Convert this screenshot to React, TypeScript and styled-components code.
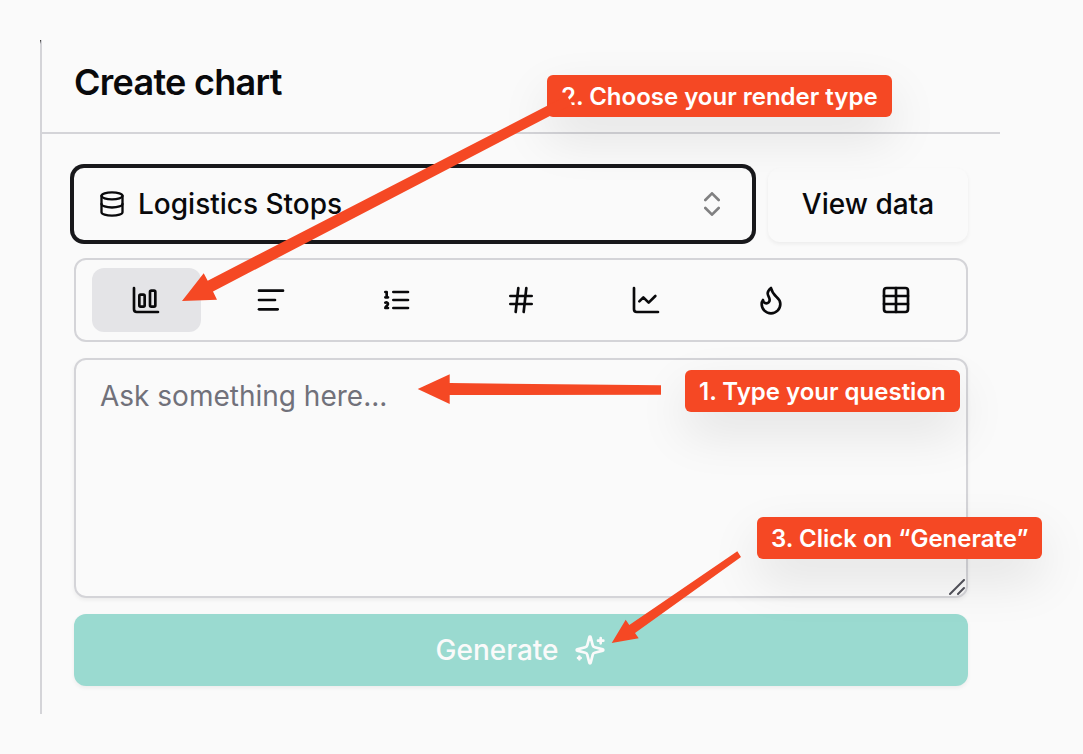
import React, { useState } from "react";
import styled, { createGlobalStyle } from "styled-components";
import {
  AlignLeft,
  ChartColumnBig,
  ChartLine,
  ChevronsUpDown,
  Database,
  Flame,
  Hash,
  Table,
} from "lucide-react";

const ink = "#09090b";
const line = "#d4d4d8";
const accent = "#f54824";
const softShadow = "0 2px 4px rgba(0, 0, 0, 0.06)";

const GlobalStyle = createGlobalStyle`
  *, *::before, *::after { box-sizing: border-box; }
  body {
    margin: 0;
    background: #fafafa;
    color: ${ink};
    font-family: Inter, "Liberation Sans", sans-serif;
  }
  button, select, textarea { font: inherit; color: inherit; }
`;

const Page = styled.main`
  position: relative;
  padding: 40px 83px 40px 40px;
`;

const Panel = styled.section`
  position: relative;
  border-left: 2px solid ${line};

  &::before {
    content: "";
    position: absolute;
    top: 0;
    left: -2px;
    width: 1px;
    height: 4px;
    background: linear-gradient(#333, ${line});
  }
`;

const Header = styled.header`
  padding: 20px 32px 28px;
  border-bottom: 2px solid ${line};
`;

const Title = styled.h1`
  margin: 0;
  font-size: 36px;
  line-height: 44px;
  font-weight: 600;
  letter-spacing: -0.02em;
`;

const Form = styled.form`
  display: flex;
  flex-direction: column;
  gap: 16px;
  padding: 34px 32px 28px;
`;

const SourceRow = styled.div`
  display: flex;
  align-items: flex-start;
  gap: 16px;
`;

const SelectBox = styled.label`
  position: relative;
  display: flex;
  flex: 1;
  border-radius: 10px;
  box-shadow: 0 0 0 4px #18181b;

  svg {
    position: absolute;
    top: 50%;
    transform: translateY(-50%);
    pointer-events: none;
  }
  svg:first-child { left: 24px; }
  svg:last-child { right: 24px; opacity: 0.5; }
`;

const Select = styled.select`
  appearance: none;
  width: 100%;
  height: 72px;
  padding: 0 64px;
  border: 0;
  border-radius: 10px;
  background: transparent;
  font-size: 28px;
  font-weight: 500;
  outline: 0;
`;

const ViewButton = styled.button`
  flex: 0 0 200px;
  height: 74px;
  padding: 0 0 2px;
  border: 0;
  border-radius: 12px;
  background: #fafafa;
  box-shadow: ${softShadow};
  font-size: 28px;
  font-weight: 500;
`;

const TypeGroup = styled.div`
  display: flex;
  gap: 16px;
  padding: 8px 16px;
  border: 2px solid ${line};
  border-radius: 12px;
`;

const TypeButton = styled.button<{ $active: boolean }>`
  display: flex;
  flex: 1;
  align-items: center;
  justify-content: center;
  height: 64px;
  padding: 0;
  border: 0;
  border-radius: 12px;
  background: ${(p) => (p.$active ? "#e4e4e7" : "transparent")};
`;

const QuestionBox = styled.div`
  position: relative;
  display: flex;
`;

const Question = styled.textarea`
  width: 100%;
  height: 240px;
  padding: 16px 24px;
  border: 2px solid ${line};
  border-radius: 12px;
  background: transparent;
  box-shadow: ${softShadow};
  font-size: 28px;
  line-height: 40px;
  resize: none;
  outline: 0;

  &::placeholder { color: #71717a; opacity: 1; }
`;

const Grip = styled.svg`
  position: absolute;
  right: 3px;
  bottom: 3px;
`;

const GenerateButton = styled.button`
  display: flex;
  align-items: center;
  justify-content: center;
  gap: 16px;
  height: 72px;
  border: 0;
  border-radius: 12px;
  background: #9adad0;
  box-shadow: ${softShadow};
  color: #fafafa;
  font-size: 28px;
  font-weight: 500;
`;

const Callout = styled.div<{ $x: number; $y: number }>`
  position: absolute;
  left: ${(p) => p.$x}px;
  top: ${(p) => p.$y}px;
  padding: 2px 14px 0;
  border-radius: 6px;
  background: ${accent};
  box-shadow: 0 20px 50px rgba(0, 0, 0, 0.1);
  color: #fff;
  font-size: 24px;
  line-height: 40px;
  font-weight: 600;
  white-space: nowrap;
`;

const Arrows = styled.svg`
  position: absolute;
  top: 0;
  left: 0;
  pointer-events: none;
`;

const stroke = {
  width: 32,
  height: 32,
  viewBox: "0 0 24 24",
  fill: "none",
  stroke: "currentColor",
  strokeWidth: 2,
  strokeLinecap: "round",
  strokeLinejoin: "round",
} as const;

const NumberedList = () => (
  <svg {...stroke}>
    <path d="M10 6h11M10 12h11M10 18h11M4 6h1v4M4 10h2M6 18H4c0-1 2-2 2-3s-1-1.5-2-1" />
  </svg>
);

const SparklesIcon = () => (
  <svg {...stroke}>
    <path d="M9.937 15.5A2 2 0 0 0 8.5 14.063l-6.135-1.582a.5.5 0 0 1 0-.962L8.5 9.936A2 2 0 0 0 9.937 8.5l1.582-6.135a.5.5 0 0 1 .963 0L14.063 8.5A2 2 0 0 0 15.5 9.937l6.135 1.581a.5.5 0 0 1 0 .964L15.5 14.063a2 2 0 0 0-1.437 1.437l-1.582 6.135a.5.5 0 0 1-.963 0z" />
    <path d="M20 3v4M22 5h-4M4 17v2M5 18H3" />
  </svg>
);

const types = [
  { name: "Bar chart", icon: <ChartColumnBig size={32} /> },
  { name: "Text", icon: <AlignLeft size={32} /> },
  { name: "List", icon: <NumberedList /> },
  { name: "Number", icon: <Hash size={32} /> },
  { name: "Line chart", icon: <ChartLine size={32} /> },
  { name: "Heat map", icon: <Flame size={32} /> },
  { name: "Table", icon: <Table size={32} /> },
];

export default function App() {
  const [active, setActive] = useState("Bar chart");
  return (
    <>
      <GlobalStyle />
      <Page>
        <Panel>
          <Header>
            <Title>Create chart</Title>
          </Header>
          <Form onSubmit={(e) => e.preventDefault()}>
            <SourceRow>
              <SelectBox>
                <Database size={28} />
                <Select aria-label="Data source">
                  <option>Logistics Stops</option>
                </Select>
                <ChevronsUpDown size={32} />
              </SelectBox>
              <ViewButton type="button">View data</ViewButton>
            </SourceRow>
            <TypeGroup role="group" aria-label="Render type">
              {types.map((t) => (
                <TypeButton
                  key={t.name}
                  type="button"
                  aria-label={t.name}
                  aria-pressed={active === t.name}
                  $active={active === t.name}
                  onClick={() => setActive(t.name)}
                >
                  {t.icon}
                </TypeButton>
              ))}
            </TypeGroup>
            <QuestionBox>
              <Question aria-label="Question" placeholder="Ask something here..." />
              <Grip width="16" height="16" stroke="#52525b" strokeWidth="2" strokeLinecap="round">
                <path d="M1 15 15 1M9 15l6-6" />
              </Grip>
            </QuestionBox>
            <GenerateButton type="submit">
              Generate
              <SparklesIcon />
            </GenerateButton>
          </Form>
        </Panel>
        <Callout $x={685} $y={370}>1. Type your question</Callout>
        <Callout $x={547} $y={75}>2. Choose your render type</Callout>
        <Callout $x={757} $y={517}>3. Click on “Generate”</Callout>
        <Arrows width="760" height="660" fill={accent} aria-hidden="true">
          <path d="M182 301 203.7 273.3 207.7 280.7 567 95.5 572 104.5 213 291.5 217 299.7Z" />
          <path d="M417.7 389 449.7 374.3V383L661 385.3V394.7L449.7 395V404Z" />
          <path d="M611.7 643 625.7 619.7 629.3 625 737.3 551.3 741 557 635 633 638.7 638.3Z" />
        </Arrows>
      </Page>
    </>
  );
}
